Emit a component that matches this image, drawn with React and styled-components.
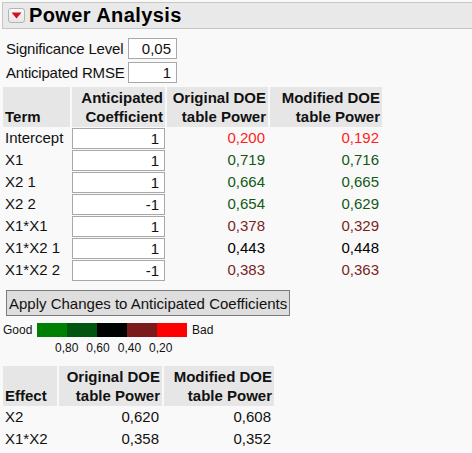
import React from "react";
import styled, { createGlobalStyle } from "styled-components";

const GlobalStyle = createGlobalStyle`
  body {
    margin: 0;
    background: #f9f9f9;
    font-family: "Liberation Sans", Arial, sans-serif;
    font-size: 15px;
    color: #111;
  }
`;

const terms = [
  { term: "Intercept", coef: "1", orig: 0.2, mod: 0.192 },
  { term: "X1", coef: "1", orig: 0.719, mod: 0.716 },
  { term: "X2 1", coef: "1", orig: 0.664, mod: 0.665 },
  { term: "X2 2", coef: "-1", orig: 0.654, mod: 0.629 },
  { term: "X1*X1", coef: "1", orig: 0.378, mod: 0.329 },
  { term: "X1*X2 1", coef: "1", orig: 0.443, mod: 0.448 },
  { term: "X1*X2 2", coef: "-1", orig: 0.383, mod: 0.363 },
];

const effects = [
  { effect: "X2", orig: "0,620", mod: "0,608" },
  { effect: "X1*X2", orig: "0,358", mod: "0,352" },
];

const legend = ["#008000", "#00560f", "#000000", "#7a1a1a", "#ff0000"];

// same buckets as the Good/Bad legend
const powerColor = (v) => {
  if (v <= 0.2) return "#ff1c1c";
  if (v < 0.4) return "#7a1f1f";
  if (v < 0.6) return "#000000";
  if (v < 0.8) return "#125a16";
  return "#008000";
};

const fmt = (v) => v.toFixed(3).replace(".", ",");

const Page = styled.div`
  padding-top: 2px;
`;

const Header = styled.div`
  display: flex;
  align-items: center;
  gap: 4px;
  height: 25px;
  margin-left: 2px;
  padding-left: 5px;
  background: #e9e9e9;
  border: 1px solid #c6c6c6;
  border-right: none;
`;

const Toggle = styled.div`
  width: 15px;
  height: 13px;
  border: 1px solid #b4b4b4;
  border-radius: 3px;
  background: linear-gradient(#fbfbfb, #e6e6e6);
  display: flex;
  align-items: center;
  justify-content: center;
`;

const Title = styled.h1`
  margin: 0;
  font-size: 20px;
  font-weight: bold;
  color: #000;
  letter-spacing: 0.4px;
`;

const Body = styled.div`
  padding: 7px 0 0 3px;
  display: flex;
  flex-direction: column;
  align-items: flex-start;
`;

const ParamRow = styled.div`
  display: flex;
  align-items: center;
  height: 24px;
  padding-left: 3px;
`;

const ParamLabel = styled.span`
  width: 122px;
  letter-spacing: -0.2px;
`;

const NumBox = styled.div`
  width: ${(p) => p.w}px;
  height: 21px;
  box-sizing: border-box;
  border: 1px solid #a8a8a8;
  background: #fff;
  text-align: right;
  padding-right: 5px;
  line-height: 19px;
  color: #111;
`;

const Table = styled.table`
  border-collapse: separate;
  border-spacing: 2px 0;
  margin-left: -2px;
  margin-top: ${(p) => p.mt}px;
`;

const Th = styled.th`
  background: #e6e6e6;
  font-weight: bold;
  text-align: ${(p) => (p.left ? "left" : "right")};
  vertical-align: bottom;
  padding: 1px 2px 1px 2px;
  line-height: 19px;
  width: ${(p) => p.w}px;
  white-space: nowrap;
`;

const Td = styled.td`
  text-align: ${(p) => (p.left ? "left" : "right")};
  padding: ${(p) => (p.box ? "1px 0 0 0" : "0 3px 0 2px")};
  height: ${(p) => p.h}px;
  line-height: 20px;
  color: ${(p) => p.color || "#111"};
  white-space: nowrap;
`;

const CoefBox = styled.div`
  height: 21px;
  box-sizing: border-box;
  border: 1px solid #a8a8a8;
  background: #fff;
  text-align: right;
  padding-right: 5px;
  line-height: 19px;
  color: #111;
`;

const ApplyButton = styled.button`
  margin: 9px 0 0 3px;
  height: 26px;
  padding: 0 2px;
  font-family: inherit;
  font-size: 15px;
  color: #111;
  background: #dedede;
  border: 1px solid #7a7a7a;
`;

const Legend = styled.div`
  display: grid;
  grid-template-columns: 34px repeat(5, 30px) auto;
  align-items: center;
  margin-top: 7px;
  font-size: 12px;
`;

const Swatch = styled.div`
  height: 14px;
  background: ${(p) => p.color};
`;

const BadLabel = styled.span`
  padding-left: 5px;
`;

const Ticks = styled.div`
  display: flex;
  gap: 8px;
  padding-left: 52px;
  margin-top: 4px;
  font-size: 12px;
`;

const Caret = () => (
  <svg width="11" height="7" viewBox="0 0 11 7">
    <path d="M0.5 0.5 H10.5 L5.5 6.5 Z" fill="#d8101c" />
  </svg>
);

export default function App() {
  return (
    <Page>
      <GlobalStyle />
      <Header>
        <Toggle>
          <Caret />
        </Toggle>
        <Title>Power Analysis</Title>
      </Header>
      <Body>
        <ParamRow>
          <ParamLabel>Significance Level</ParamLabel>
          <NumBox w={49}>0,05</NumBox>
        </ParamRow>
        <ParamRow>
          <ParamLabel>Anticipated RMSE</ParamLabel>
          <NumBox w={49}>1</NumBox>
        </ParamRow>

        <Table mt={3}>
          <thead>
            <tr>
              <Th left w={63}>Term</Th>
              <Th w={89}>
                Anticipated
                <br />
                Coefficient
              </Th>
              <Th w={97}>
                Original DOE
                <br />
                table Power
              </Th>
              <Th w={108}>
                Modified DOE
                <br />
                table Power
              </Th>
            </tr>
          </thead>
          <tbody>
            {terms.map((r) => (
              <tr key={r.term}>
                <Td left h={21}>{r.term}</Td>
                <Td box h={21}>
                  <CoefBox>{r.coef}</CoefBox>
                </Td>
                <Td h={21} color={powerColor(r.orig)}>{fmt(r.orig)}</Td>
                <Td h={21} color={powerColor(r.mod)}>{fmt(r.mod)}</Td>
              </tr>
            ))}
          </tbody>
        </Table>

        <ApplyButton>Apply Changes to Anticipated Coefficients</ApplyButton>

        <Legend>
          <span>Good</span>
          {legend.map((c) => (
            <Swatch key={c} color={c} />
          ))}
          <BadLabel>Bad</BadLabel>
        </Legend>
        <Ticks>
          <span>0,80</span>
          <span>0,60</span>
          <span>0,40</span>
          <span>0,20</span>
        </Ticks>

        <Table mt={11}>
          <thead>
            <tr>
              <Th left w={50}>Effect</Th>
              <Th w={99}>
                Original DOE
                <br />
                table Power
              </Th>
              <Th w={106}>
                Modified DOE
                <br />
                table Power
              </Th>
            </tr>
          </thead>
          <tbody>
            {effects.map((r) => (
              <tr key={r.effect}>
                <Td left h={22}>{r.effect}</Td>
                <Td h={22}>{r.orig}</Td>
                <Td h={22}>{r.mod}</Td>
              </tr>
            ))}
          </tbody>
        </Table>
      </Body>
    </Page>
  );
}
